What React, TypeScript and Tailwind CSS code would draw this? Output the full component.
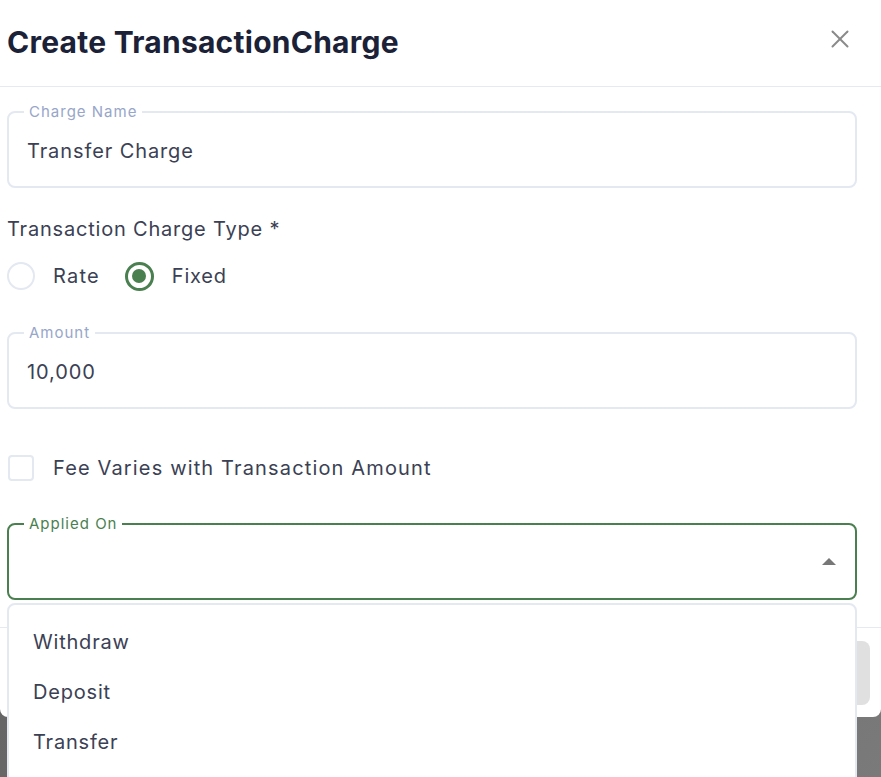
import React, { useState } from 'react';
import { X } from 'lucide-react';

const font = { fontFamily: 'Inter, "Noto Sans", sans-serif' };

const OutlinedField: React.FC<{ label: string; value?: string; focused?: boolean; children?: React.ReactNode }> = ({
  label,
  value,
  focused,
  children,
}) => (
  <div
    className={`relative h-[77px] rounded-[8px] border-2 flex items-center px-[18px] pt-[3px] ${
      focused ? 'border-[#4a7f4f]' : 'border-[#e3e8f1]'
    }`}
  >
    <span
      className={`absolute left-[15px] top-0 -translate-y-[62%] bg-white px-[5px] text-[15px] leading-none tracking-[1px] ${
        focused ? 'text-[#4a7f4f]' : 'text-[#97a6c9]'
      }`}
    >
      {label}
    </span>
    <span className="text-[20px] text-[#3b4154] tracking-[0.9px]">{value}</span>
    {children}
  </div>
);

const App: React.FC = () => {
  const [type, setType] = useState<'rate' | 'fixed'>('fixed');
  const [varies, setVaries] = useState(false);

  return (
    <div
      className="h-[777px] w-full overflow-hidden bg-gradient-to-br from-[#555555] to-[#7a7a7a]"
      style={font}
    >
      <div className="relative bg-white rounded-b-[8px] h-[717px]">
        {/* header */}
        <div className="h-[87px] flex items-center justify-between pl-[7px] pr-[26px] border-b border-[#e6e9ef]">
          <h2 className="text-[30px] leading-none font-bold tracking-[0.25px] text-[#1b2137] -mt-[3px]">
            Create TransactionCharge
          </h2>
          <button className="text-[#8a8a8a] -mt-[8px]">
            <X size={30} strokeWidth={1.6} />
          </button>
        </div>

        {/* body */}
        <div className="pl-[7px] pr-[24px] pt-[24px]">
          <OutlinedField label="Charge Name" value="Transfer Charge" />

          <p className="mt-[29px] text-[20px] leading-[24px] tracking-[0.8px] text-[#3b4154]">Transaction Charge Type *</p>

          <div className="mt-[19px] flex items-center h-[32px]">
            <button onClick={() => setType('rate')} className="flex items-center">
              <span
                className={`w-[28px] h-[28px] rounded-full flex items-center justify-center ${
                  type === 'rate' ? 'border-[3px] border-[#4a7f4f]' : 'border-2 border-[#e3e8f1]'
                }`}
              >
                {type === 'rate' && <span className="w-[14px] h-[14px] rounded-full bg-[#4a7f4f]" />}
              </span>
              <span className="ml-[18px] text-[20px] tracking-[1.2px] text-[#3b4154]">Rate</span>
            </button>
            <button onClick={() => setType('fixed')} className="flex items-center ml-[25px]">
              <span
                className={`w-[29px] h-[29px] rounded-full flex items-center justify-center ${
                  type === 'fixed' ? 'border-[3px] border-[#4a7f4f]' : 'border-2 border-[#e3e8f1]'
                }`}
              >
                {type === 'fixed' && <span className="w-[14px] h-[14px] rounded-full bg-[#4a7f4f]" />}
              </span>
              <span className="ml-[18px] text-[20px] tracking-[0.8px] text-[#3b4154]">Fixed</span>
            </button>
          </div>

          <div className="mt-[40px]">
            <OutlinedField label="Amount" value="10,000" />
          </div>

          <button onClick={() => setVaries(!varies)} className="mt-[44px] flex items-center">
            <span
              className={`w-[26px] h-[26px] ml-[1px] rounded-[4px] border-2 ${
                varies ? 'bg-[#4a7f4f] border-[#4a7f4f]' : 'border-[#e3e8f1]'
              }`}
            />
            <span className="ml-[19px] text-[20px] tracking-[1.15px] text-[#3b4154]">Fee Varies with Transaction Amount</span>
          </button>

          <div className="relative mt-[40px]">
            <OutlinedField label="Applied On" focused>
              <svg className="ml-auto mr-[1px] -mt-[3px]" width="14" height="7" viewBox="0 0 14 7">
                <path d="M0 7 L7 0 L14 7 Z" fill="#777777" />
              </svg>
            </OutlinedField>

            <div className="absolute left-0 right-0 top-[80px] z-10 h-[200px] bg-white rounded-[8px] border-2 border-[#e3e8f1] pt-[12px]">
              {['Withdraw', 'Deposit', 'Transfer'].map((opt) => (
                <div key={opt} className="h-[50px] flex items-center px-[24px] text-[20px] tracking-[0.8px] text-[#3b4154]">
                  {opt}
                </div>
              ))}
            </div>
          </div>
        </div>

        {/* footer */}
        <div className="absolute left-0 right-0 top-[627px] border-t border-[#e6e9ef] flex justify-end pr-[11px] pt-[13px]">
          <button className="h-[64px] px-[40px] rounded-[8px] bg-[#e0e0e0] text-[#9e9e9e] text-[17px] font-semibold">
            Create
          </button>
        </div>
      </div>
    </div>
  );
};

export default App;
